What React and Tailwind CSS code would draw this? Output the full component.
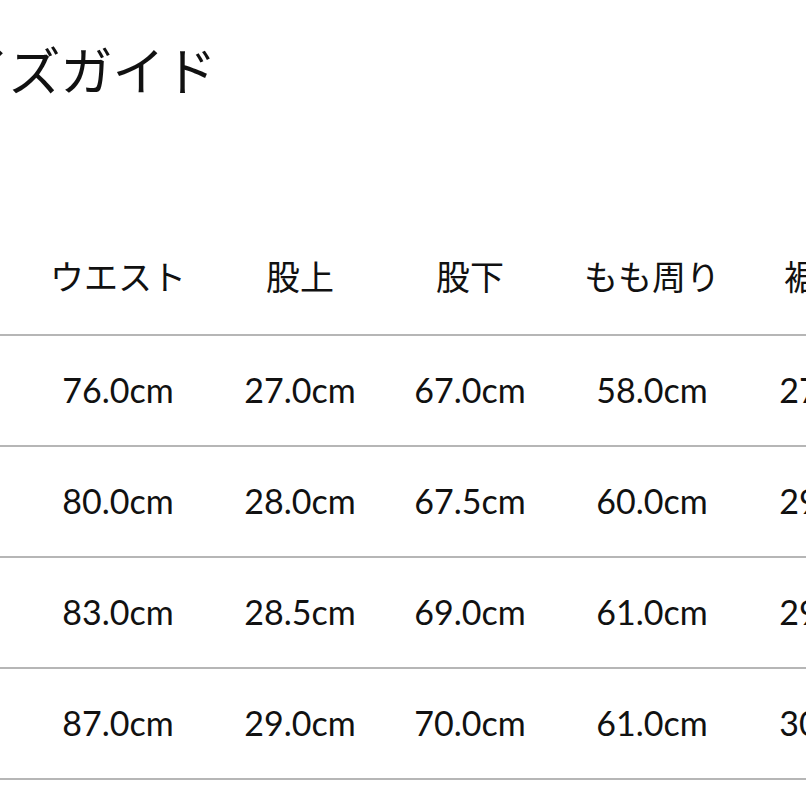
const columns = ["", "ウエスト", "股上", "股下", "もも周り", "裾周り"];

const rows = [
  ["S", "76.0cm", "27.0cm", "67.0cm", "58.0cm", "27.0cm"],
  ["M", "80.0cm", "28.0cm", "67.5cm", "60.0cm", "29.0cm"],
  ["L", "83.0cm", "28.5cm", "69.0cm", "61.0cm", "29.5cm"],
  ["XL", "87.0cm", "29.0cm", "70.0cm", "61.0cm", "30.0cm"],
];

const widths = ["w-[120px]", "w-[194px]", "w-[170px]", "w-[170px]", "w-[194px]", "w-[172px]"];

function Row({ cells, header }) {
  return (
    <div
      className={`flex shrink-0 items-center border-b-2 border-[#b6b6b6] ${
        header ? "h-[117px]" : "h-[111px] pb-[2px]"
      }`}
    >
      {cells.map((c, i) => (
        <div key={i} className={`${widths[i]} shrink-0 text-center whitespace-nowrap`}>
          {c}
        </div>
      ))}
    </div>
  );
}

export default function App() {
  return (
    <div
      className="w-[806px] h-[806px] overflow-hidden bg-white text-[#111]"
      style={{ fontFamily: 'Lato, "Noto Sans CJK JP", sans-serif' }}
    >
      <h1 className="ml-[-94px] pt-[45px] text-[52px] leading-none font-normal whitespace-nowrap">
        サイズガイド
      </h1>
      <div className="ml-[-99px] mt-[122px] w-[1020px] text-[34px] leading-none">
        <Row cells={columns} header />
        {rows.map((r, i) => (
          <Row key={i} cells={r} />
        ))}
      </div>
    </div>
  );
}
